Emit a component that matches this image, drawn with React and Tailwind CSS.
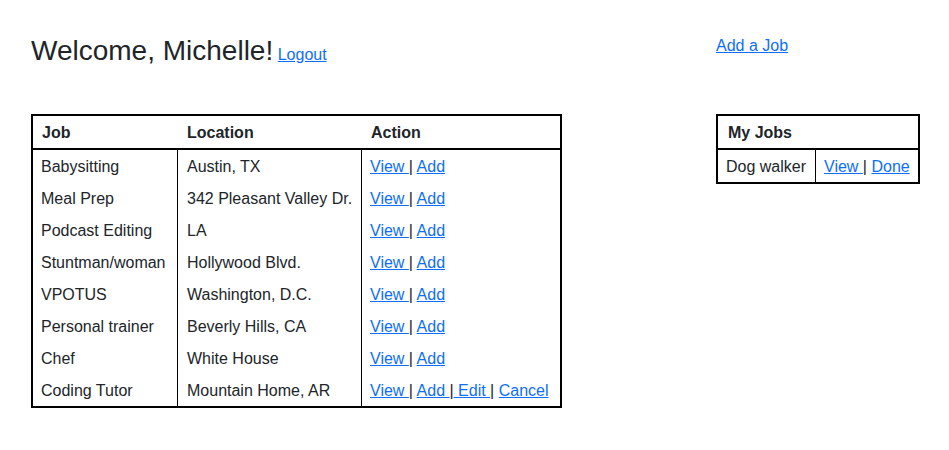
import React from 'react';

const jobs = [
  { job: 'Babysitting', location: 'Austin, TX' },
  { job: 'Meal Prep', location: '342 Pleasant Valley Dr.' },
  { job: 'Podcast Editing', location: 'LA' },
  { job: 'Stuntman/woman', location: 'Hollywood Blvd.' },
  { job: 'VPOTUS', location: 'Washington, D.C.' },
  { job: 'Personal trainer', location: 'Beverly Hills, CA' },
  { job: 'Chef', location: 'White House' },
  { job: 'Coding Tutor', location: 'Mountain Home, AR', owner: true },
];

const A = ({ children }) => (
  <a href="#" className="text-[#0d6efd] underline whitespace-pre">
    {children}
  </a>
);

export default function App() {
  return (
    <div
      className="flex pt-[33px] pl-[31px] text-[16px] leading-6 text-[#212529] bg-white min-h-screen"
      style={{ fontFamily: '"Liberation Sans", Arial, sans-serif' }}
    >
      <div className="w-[685px] shrink-0">
        <div className="h-[81px] pt-px">
          <h3 className="inline text-[28px] leading-[1.2] font-medium">Welcome, Michelle!</h3>{' '}
          <A>Logout</A>
        </div>
        <table className="w-[531px] table-fixed border-separate border-spacing-0 border-2 border-black">
          <colgroup>
            <col className="w-[144px]" />
            <col className="w-[184px]" />
            <col className="w-[199px]" />
          </colgroup>
          <thead>
            <tr>
              <th className="text-left font-bold pl-[9px] pt-[5px] pb-[3px] border-b-2 border-black">Job</th>
              <th className="text-left font-bold pl-[10px] pt-[5px] pb-[3px] border-b-2 border-black">Location</th>
              <th className="text-left font-bold pl-[10px] pt-[5px] pb-[3px] border-b-2 border-black">Action</th>
            </tr>
          </thead>
          <tbody>
            {jobs.map((j) => (
              <tr key={j.job}>
                <td className="pl-[8px] pt-[5px] pb-[3px] whitespace-nowrap">{j.job}</td>
                <td className="pl-[9px] pt-[5px] pb-[3px] border-l border-black whitespace-nowrap">{j.location}</td>
                <td className="pl-[8px] pt-[5px] pb-[3px] border-l border-black whitespace-nowrap">
                  <A>View </A>| <A>Add</A>
                  {j.owner && (
                    <>
                      <A> </A>|<A> Edit </A>| <A>Cancel</A>
                    </>
                  )}
                </td>
              </tr>
            ))}
          </tbody>
        </table>
      </div>
      <div>
        <div className="h-[81px] pt-px">
          <A>Add a Job</A>
        </div>
        <table className="w-[204px] table-fixed border-separate border-spacing-0 border-2 border-black">
          <colgroup>
            <col className="w-[97px]" />
            <col className="w-[103px]" />
          </colgroup>
          <thead>
            <tr>
              <th colSpan={2} className="text-left font-bold pl-[10px] pt-[5px] pb-[3px] border-b-2 border-black">
                My Jobs
              </th>
            </tr>
          </thead>
          <tbody>
            <tr>
              <td className="pl-[8px] pt-[5px] pb-[3px] whitespace-nowrap">Dog walker</td>
              <td className="pl-[8px] pt-[5px] pb-[3px] border-l border-black whitespace-nowrap">
                <A>View </A>| <A>Done</A>
              </td>
            </tr>
          </tbody>
        </table>
      </div>
    </div>
  );
}
